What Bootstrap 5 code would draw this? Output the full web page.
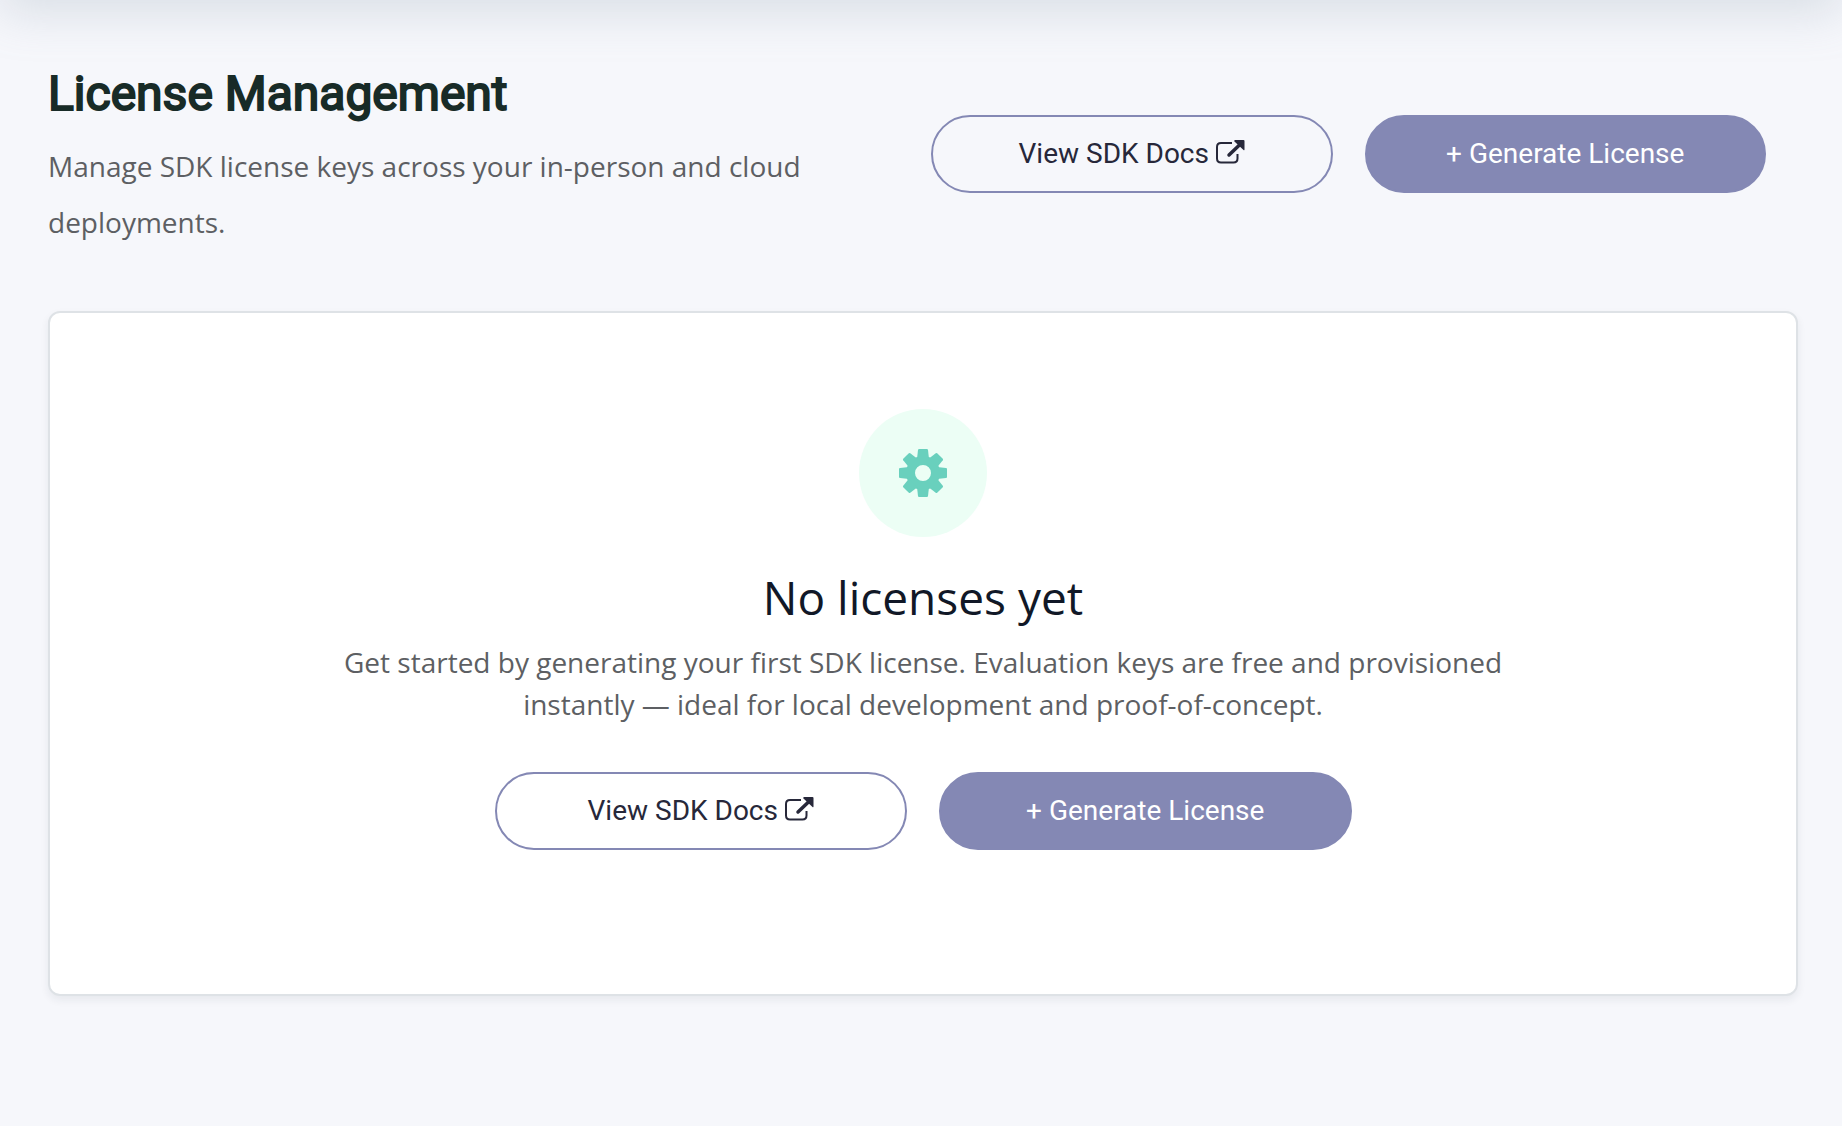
<!DOCTYPE html>
<html lang="en">
<head>
<meta charset="utf-8">
<meta name="viewport" content="width=device-width, initial-scale=1">
<title>License Management</title>
<link href="https://cdn.jsdelivr.net/npm/bootstrap@5.3.0/dist/css/bootstrap.min.css" rel="stylesheet">
<style>
  body { background: #f6f7fb; font-family: "Open Sans", sans-serif; color: #5d5f63; font-size: 28px; }
  /* only the shadow of the top bar shows */
  .topbar-edge { height: 60px; margin-top: -60px; box-shadow: 0 12px 48px rgba(140, 158, 175, .28); }
  .page-body { padding: 58px 44px 48px 48px; }
  .page-title { font: 400 48px/72px Roboto, sans-serif; color: #182b27; -webkit-text-stroke: 2px #182b27; margin: 0 0 8px; }
  .page-desc { line-height: 56px; margin: 0; }
  .header-actions { padding: 0 32px 0 8px; }
  .action-row { gap: 32px; }
  .btn-pill { height: 78px; border-radius: 40px; border: 2px solid #8488b4; font: 400 28px/42px Roboto, sans-serif; padding: 0; flex: 1 1 0; }
  .btn-docs, .btn-docs:hover { color: #27283a; border-color: #8488b4; gap: 6px; }
  .btn-gen, .btn-gen:hover { color: #fff; background: #8488b4; border-color: #8488b4; }
  .ext-icon { width: 30px; height: 34px; }
  .empty-card { margin-top: 61px; border: 2px solid #dee2e6; border-radius: 12px; box-shadow: 0 4px 8px rgba(30, 40, 60, .07); padding: 96px 24px 144px; }
  .icon-disc { width: 128px; height: 128px; background: #ecfef5; color: #69d0bd; }
  .empty-title { font-size: 46px; line-height: 56px; font-weight: 400; color: #111827; margin: 32px 0 16px; }
  .empty-text { line-height: 42px; max-width: 1200px; margin: 0 0 47px; }
  .empty-actions { width: 100%; max-width: 857px; }
</style>
</head>
<body>
<svg width="0" height="0" class="position-absolute" aria-hidden="true">
  <symbol id="external" viewBox="0 0 30 34"><g fill="none" stroke="currentColor"><path d="M17 6H6Q2 6 2 10V21.500Q2 25.500 6 25.500H18.500Q22.500 25.500 22.500 21.500V17" stroke-width="2"/><path d="M14 18L25 7.500" stroke-width="3.500" stroke-linecap="round"/></g><path d="M20 3H28.500Q29.500 3 29.500 4V12.500Q29.500 13.800 28.500 13L19.500 4.500Q18.800 3 20 3Z" fill="currentColor"/></symbol>
</svg>
<div class="topbar-edge"></div>
<main class="page-body">
  <header class="row g-0 align-items-center">
    <div class="col-6">
      <h1 class="page-title">License Management</h1>
      <p class="page-desc">Manage SDK license keys across your in-person and cloud deployments.</p>
    </div>
    <div class="col-6 header-actions d-flex action-row">
      <a href="#docs" class="btn btn-pill btn-docs d-flex align-items-center justify-content-center"><span>View SDK Docs</span><svg class="ext-icon" aria-hidden="true"><use href="#external"/></svg></a>
      <button type="button" class="btn btn-pill btn-gen">+ Generate License</button>
    </div>
  </header>
  <section class="card empty-card align-items-center text-center">
    <div class="icon-disc rounded-circle d-flex align-items-center justify-content-center">
      <svg width="48" height="48" viewBox="-24 -24 48 48" fill="currentColor" aria-hidden="true">
        <defs><path id="tooth" d="M-6 -14L-5 -23Q-4.800 -24 -4 -24H4Q4.800 -24 5 -23L6 -14Z"/></defs>
        <path fill-rule="evenodd" d="M0 -17A17 17 0 1 1 0 17A17 17 0 1 1 0 -17ZM0 -8A8 8 0 1 0 0 8A8 8 0 1 0 0 -8Z"/>
        <use href="#tooth"/><use href="#tooth" transform="rotate(45)"/><use href="#tooth" transform="rotate(90)"/><use href="#tooth" transform="rotate(135)"/><use href="#tooth" transform="rotate(180)"/><use href="#tooth" transform="rotate(225)"/><use href="#tooth" transform="rotate(270)"/><use href="#tooth" transform="rotate(315)"/>
      </svg>
    </div>
    <h2 class="empty-title">No licenses yet</h2>
    <p class="empty-text">Get started by generating your first SDK license. Evaluation keys are free and provisioned instantly — ideal for local development and proof-of-concept.</p>
    <div class="empty-actions d-flex action-row">
      <a href="#docs" class="btn btn-pill btn-docs d-flex align-items-center justify-content-center"><span>View SDK Docs</span><svg class="ext-icon" aria-hidden="true"><use href="#external"/></svg></a>
      <button type="button" class="btn btn-pill btn-gen">+ Generate License</button>
    </div>
  </section>
</main>
<script src="https://cdn.jsdelivr.net/npm/bootstrap@5.3.0/dist/js/bootstrap.bundle.min.js"></script>
</body>
</html>
